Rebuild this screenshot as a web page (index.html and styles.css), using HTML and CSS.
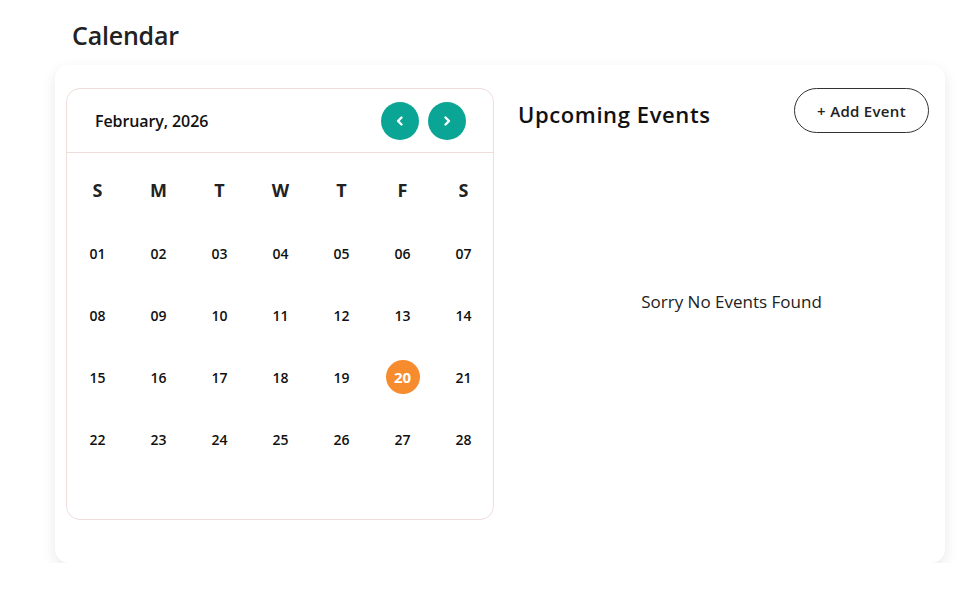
FILE: index.html
```html
<!DOCTYPE html>
<html lang="en">
<head>
<meta charset="utf-8">
<title>Calendar</title>
<link rel="stylesheet" href="styles.css">
</head>
<body>
<div class="page">
  <h1 class="page-title">Calendar</h1>
  <div class="card">
    <div class="calendar">
      <div class="cal-head">
        <div class="month">February, 2026</div>
        <div class="nav">
          <button class="nav-btn" aria-label="Previous"><svg width="12" height="12" viewBox="0 0 12 12"><polyline points="7.5,2.5 4,6 7.5,9.5" fill="none" stroke="#fff" stroke-width="2.4" stroke-linecap="round" stroke-linejoin="round"/></svg></button>
          <button class="nav-btn" aria-label="Next"><svg width="12" height="12" viewBox="0 0 12 12"><polyline points="4.5,2.5 8,6 4.5,9.5" fill="none" stroke="#fff" stroke-width="2.4" stroke-linecap="round" stroke-linejoin="round"/></svg></button>
        </div>
      </div>
      <div class="grid">
        <div class="wd">S</div><div class="wd">M</div><div class="wd">T</div><div class="wd">W</div><div class="wd">T</div><div class="wd">F</div><div class="wd">S</div>
        <div class="day"><span>01</span></div><div class="day"><span>02</span></div><div class="day"><span>03</span></div><div class="day"><span>04</span></div><div class="day"><span>05</span></div><div class="day"><span>06</span></div><div class="day"><span>07</span></div>
        <div class="day"><span>08</span></div><div class="day"><span>09</span></div><div class="day"><span>10</span></div><div class="day"><span>11</span></div><div class="day"><span>12</span></div><div class="day"><span>13</span></div><div class="day"><span>14</span></div>
        <div class="day"><span>15</span></div><div class="day"><span>16</span></div><div class="day"><span>17</span></div><div class="day"><span>18</span></div><div class="day"><span>19</span></div><div class="day"><span class="today">20</span></div><div class="day"><span>21</span></div>
        <div class="day"><span>22</span></div><div class="day"><span>23</span></div><div class="day"><span>24</span></div><div class="day"><span>25</span></div><div class="day"><span>26</span></div><div class="day"><span>27</span></div><div class="day"><span>28</span></div>
      </div>
    </div>
    <div class="events">
      <div class="events-head">
        <h2 class="events-title">Upcoming Events</h2>
        <button class="add-btn">+ Add Event</button>
      </div>
      <div class="empty">Sorry No Events Found</div>
    </div>
  </div>
</div>
</body>
</html>
```
FILE: styles.css
```css
* { box-sizing: border-box; }
html, body { margin: 0; padding: 0; background: #fff; }
body { font-family: "Open Sans", "Noto Sans", sans-serif; color: #222; }

.page { padding: 20px 25px 0 55px; width: 970px; }
.page-title {
  margin: 0 0 14px 17px;
  font-size: 25px;
  font-weight: 600;
  line-height: 31px;
  color: #222;
  letter-spacing: -0.2px;
}

.card {
  width: 890px;
  height: 498px;
  background: #fff;
  border-radius: 14px;
  box-shadow: 0 5px 14px rgba(20, 30, 60, 0.1);
  padding: 23px 16px 0 11px;
  display: flex;
  gap: 23px;
}

.calendar {
  width: 428px;
  height: 432px;
  border: 1px solid #f1dcdc;
  border-radius: 14px;
  flex: none;
}

.cal-head {
  height: 64px;
  border-bottom: 1px solid #f1dcdc;
  display: flex;
  align-items: center;
  justify-content: space-between;
  padding: 0 27px 0 28px;
}
.month { font-size: 16px; font-weight: 600; color: #111; letter-spacing: -0.1px; }
.nav { display: flex; gap: 9px; }
.nav-btn {
  width: 38px; height: 38px;
  border-radius: 50%;
  border: none;
  background: #0aa595;
  display: flex; align-items: center; justify-content: center;
  padding: 0;
}

.grid {
  display: grid;
  grid-template-columns: repeat(7, 61px);
  grid-template-rows: 64px repeat(4, 62px);
  padding-top: 5px;
}
.wd {
  display: flex; align-items: center; justify-content: center;
  font-size: 18px; font-weight: 700; color: #222;
}
.day {
  display: flex; align-items: center; justify-content: center;
  font-size: 14px; font-weight: 600; color: #111;
}
.day span {
  width: 34px; height: 34px;
  display: flex; align-items: center; justify-content: center;
  border-radius: 50%;
}
.day .today { background: #f68c2e; color: #fff; font-weight: 700; font-size: 15px; }

.events { flex: 1; display: flex; flex-direction: column; padding-left: 1px; }
.events-head {
  display: flex; align-items: flex-start; justify-content: space-between;
  height: 45px;
}
.events-title {
  margin: 11px 0 0 0;
  font-size: 22px; font-weight: 600; color: #111;
  line-height: 30px;
  letter-spacing: 0.6px;
}
.add-btn {
  width: 135px; height: 45px;
  border: 1px solid #333;
  border-radius: 23px;
  background: #fff;
  font-family: inherit;
  font-size: 15px; font-weight: 600; color: #222;
  padding: 0;
  letter-spacing: 0.3px;
}
.empty {
  margin-top: 157px;
  text-align: center;
  font-size: 17px;
  color: #222;
  padding-left: 16px;
}
```
